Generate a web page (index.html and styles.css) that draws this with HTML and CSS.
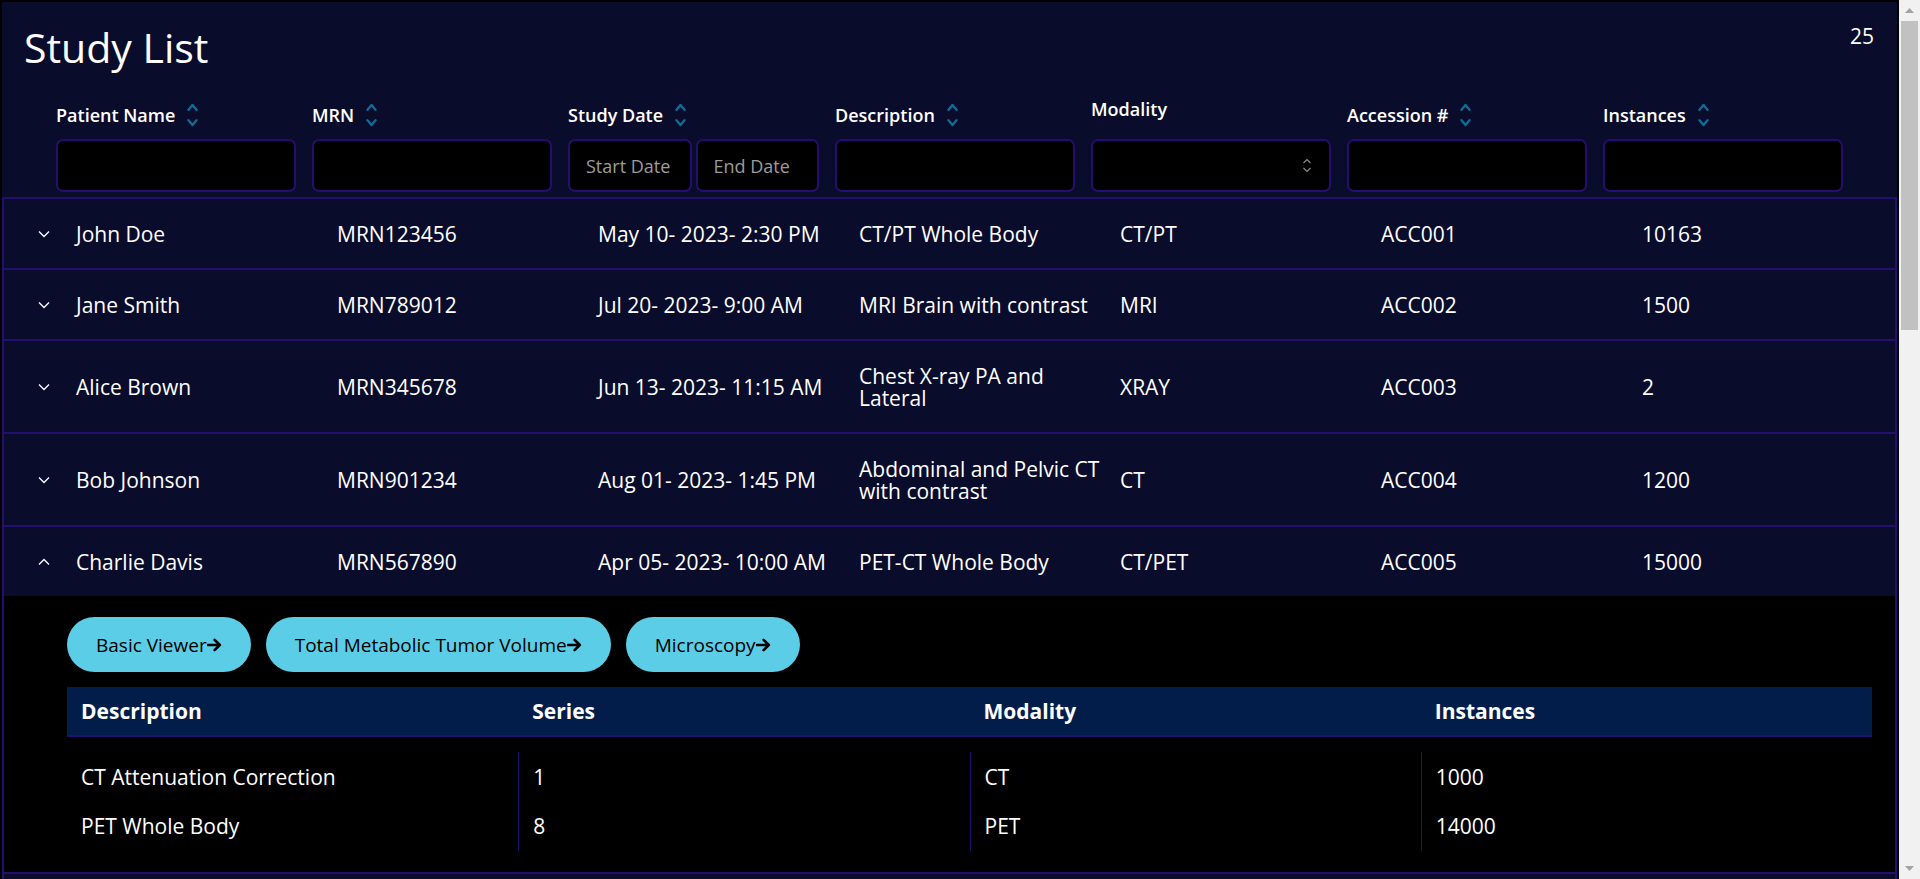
FILE: index.html
```html
<!DOCTYPE html>
<html lang="en">
<head>
<meta charset="utf-8">
<title>Study List</title>
<link rel="stylesheet" href="styles.css">
</head>
<body>
<div class="viewport">
<div class="app">
  <header class="header">
    <div class="title-row">
      <h1 class="title">Study List</h1>
      <span class="count">25</span>
    </div>
    <div class="filters">
      <div class="filter">
        <div class="flabel">Patient Name <svg class="sort" width="11" height="24" viewBox="0 0 11 24"><path d="M1.5 6.8 L5.5 2 L9.5 6.8 M1.5 17.2 L5.5 22 L9.5 17.2"/></svg></div>
        <input class="box" type="text">
      </div>
      <div class="filter">
        <div class="flabel">MRN <svg class="sort" width="11" height="24" viewBox="0 0 11 24"><path d="M1.5 6.8 L5.5 2 L9.5 6.8 M1.5 17.2 L5.5 22 L9.5 17.2"/></svg></div>
        <input class="box" type="text">
      </div>
      <div class="filter filter-date">
        <div class="flabel">Study Date <svg class="sort" width="11" height="24" viewBox="0 0 11 24"><path d="M1.5 6.8 L5.5 2 L9.5 6.8 M1.5 17.2 L5.5 22 L9.5 17.2"/></svg></div>
        <div class="date-pair">
          <input class="box" type="text" placeholder="Start Date">
          <input class="box" type="text" placeholder="End Date">
        </div>
      </div>
      <div class="filter">
        <div class="flabel">Description <svg class="sort" width="11" height="24" viewBox="0 0 11 24"><path d="M1.5 6.8 L5.5 2 L9.5 6.8 M1.5 17.2 L5.5 22 L9.5 17.2"/></svg></div>
        <input class="box" type="text">
      </div>
      <div class="filter">
        <div class="flabel flabel-plain">Modality</div>
        <div class="box select">
          <svg class="select-icon" width="10" height="15" viewBox="0 0 10 15"><path d="M1.5 5 L5 1.5 L8.5 5 M1.5 10 L5 13.5 L8.5 10"/></svg>
        </div>
      </div>
      <div class="filter">
        <div class="flabel">Accession # <svg class="sort" width="11" height="24" viewBox="0 0 11 24"><path d="M1.5 6.8 L5.5 2 L9.5 6.8 M1.5 17.2 L5.5 22 L9.5 17.2"/></svg></div>
        <input class="box" type="text">
      </div>
      <div class="filter">
        <div class="flabel">Instances <svg class="sort" width="11" height="24" viewBox="0 0 11 24"><path d="M1.5 6.8 L5.5 2 L9.5 6.8 M1.5 17.2 L5.5 22 L9.5 17.2"/></svg></div>
        <input class="box" type="text">
      </div>
    </div>
  </header>

  <div class="studies">
    <div class="row">
      <div class="cell toggle"><svg width="12" height="8" viewBox="0 0 12 8"><path d="M1 1.5 L6 6.5 L11 1.5"/></svg></div>
      <div class="cell">John Doe</div><div class="cell">MRN123456</div><div class="cell">May 10- 2023- 2:30 PM</div><div class="cell">CT/PT Whole Body</div><div class="cell">CT/PT</div><div class="cell">ACC001</div><div class="cell">10163</div>
    </div>
    <div class="row">
      <div class="cell toggle"><svg width="12" height="8" viewBox="0 0 12 8"><path d="M1 1.5 L6 6.5 L11 1.5"/></svg></div>
      <div class="cell">Jane Smith</div><div class="cell">MRN789012</div><div class="cell">Jul 20- 2023- 9:00 AM</div><div class="cell">MRI Brain with contrast</div><div class="cell">MRI</div><div class="cell">ACC002</div><div class="cell">1500</div>
    </div>
    <div class="row">
      <div class="cell toggle"><svg width="12" height="8" viewBox="0 0 12 8"><path d="M1 1.5 L6 6.5 L11 1.5"/></svg></div>
      <div class="cell">Alice Brown</div><div class="cell">MRN345678</div><div class="cell">Jun 13- 2023- 11:15 AM</div><div class="cell">Chest X-ray PA and Lateral</div><div class="cell">XRAY</div><div class="cell">ACC003</div><div class="cell">2</div>
    </div>
    <div class="row">
      <div class="cell toggle"><svg width="12" height="8" viewBox="0 0 12 8"><path d="M1 1.5 L6 6.5 L11 1.5"/></svg></div>
      <div class="cell">Bob Johnson</div><div class="cell">MRN901234</div><div class="cell">Aug 01- 2023- 1:45 PM</div><div class="cell">Abdominal and Pelvic CT with contrast</div><div class="cell">CT</div><div class="cell">ACC004</div><div class="cell">1200</div>
    </div>
    <div class="row row-open">
      <div class="cell toggle"><svg width="12" height="8" viewBox="0 0 12 8"><path d="M1 6.5 L6 1.5 L11 6.5"/></svg></div>
      <div class="cell">Charlie Davis</div><div class="cell">MRN567890</div><div class="cell">Apr 05- 2023- 10:00 AM</div><div class="cell">PET-CT Whole Body</div><div class="cell">CT/PET</div><div class="cell">ACC005</div><div class="cell">15000</div>
    </div>
    <div class="expanded">
      <div class="modes">
        <button class="mode-btn" type="button">Basic Viewer<svg width="15" height="14" viewBox="0 0 15 14"><path d="M1 7 H12.8 M7.6 1.8 L12.8 7 L7.6 12.2"/></svg></button>
        <button class="mode-btn" type="button">Total Metabolic Tumor Volume<svg width="15" height="14" viewBox="0 0 15 14"><path d="M1 7 H12.8 M7.6 1.8 L12.8 7 L7.6 12.2"/></svg></button>
        <button class="mode-btn" type="button">Microscopy<svg width="15" height="14" viewBox="0 0 15 14"><path d="M1 7 H12.8 M7.6 1.8 L12.8 7 L7.6 12.2"/></svg></button>
      </div>
      <div class="series">
        <div class="series-head">
          <div class="scell">Description</div><div class="scell">Series</div><div class="scell">Modality</div><div class="scell">Instances</div>
        </div>
        <div class="series-body">
          <div class="series-row">
            <div class="scell">CT Attenuation Correction</div><div class="scell">1</div><div class="scell">CT</div><div class="scell">1000</div>
          </div>
          <div class="series-row">
            <div class="scell">PET Whole Body</div><div class="scell">8</div><div class="scell">PET</div><div class="scell">14000</div>
          </div>
        </div>
      </div>
    </div>
    <div class="row"><div class="cell toggle"><svg width="12" height="8" viewBox="0 0 12 8"><path d="M1 1.5 L6 6.5 L11 1.5"/></svg></div><div class="cell">Emily Clark</div><div class="cell">MRN234567</div><div class="cell">Sep 12- 2023- 8:30 AM</div><div class="cell">CT Head without contrast</div><div class="cell">CT</div><div class="cell">ACC006</div><div class="cell">320</div></div>
    <div class="row"><div class="cell toggle"><svg width="12" height="8" viewBox="0 0 12 8"><path d="M1 1.5 L6 6.5 L11 1.5"/></svg></div><div class="cell">Frank Miller</div><div class="cell">MRN678901</div><div class="cell">Oct 03- 2023- 3:10 PM</div><div class="cell">MRI Knee Left</div><div class="cell">MRI</div><div class="cell">ACC007</div><div class="cell">640</div></div>
    <div class="row"><div class="cell toggle"><svg width="12" height="8" viewBox="0 0 12 8"><path d="M1 1.5 L6 6.5 L11 1.5"/></svg></div><div class="cell">Grace Lee</div><div class="cell">MRN112233</div><div class="cell">Feb 14- 2023- 11:45 AM</div><div class="cell">Mammography Bilateral</div><div class="cell">MG</div><div class="cell">ACC008</div><div class="cell">4</div></div>
    <div class="row"><div class="cell toggle"><svg width="12" height="8" viewBox="0 0 12 8"><path d="M1 1.5 L6 6.5 L11 1.5"/></svg></div><div class="cell">Henry Wilson</div><div class="cell">MRN445566</div><div class="cell">Mar 22- 2023- 9:20 AM</div><div class="cell">Ultrasound Abdomen</div><div class="cell">US</div><div class="cell">ACC009</div><div class="cell">48</div></div>
    <div class="row"><div class="cell toggle"><svg width="12" height="8" viewBox="0 0 12 8"><path d="M1 1.5 L6 6.5 L11 1.5"/></svg></div><div class="cell">Isabel Moore</div><div class="cell">MRN778899</div><div class="cell">Nov 08- 2023- 4:05 PM</div><div class="cell">CT Chest with contrast</div><div class="cell">CT</div><div class="cell">ACC010</div><div class="cell">410</div></div>
  </div>
</div>
</div>
<div class="scrollbar" aria-hidden="true">
  <div class="sb-btn"><svg width="9" height="5" viewBox="0 0 9 5"><polygon points="0,5 4.5,0 9,5"/></svg></div>
  <div class="sb-track"><div class="sb-thumb"></div></div>
  <div class="sb-btn"><svg width="9" height="5" viewBox="0 0 9 5"><polygon points="0,0 9,0 4.5,5"/></svg></div>
</div>
</body>
</html>
```

FILE: styles.css
```css
:root {
  --navy: #0a0c2c;
  --line: #260e70;
  --sort: #106b97;
  --sub: #031d4b;
  --btn: #5ccde6;
}

html {
  background: #000;
}

body {
  margin: 0;
  height: 100vh;
  overflow: hidden;
  display: flex;
  background: #000;
  color: #fff;
  font-family: "Open Sans", "Noto Sans", sans-serif;
}

.viewport {
  flex: 1;
  min-width: 0;
  height: 100vh;
  overflow: hidden;
}

/* fake classic scrollbar */
.scrollbar {
  flex: none;
  width: 21px;
  height: 100vh;
  display: flex;
  flex-direction: column;
  background: #f1f1f1;
}

.sb-btn {
  height: 21px;
  flex: none;
  display: flex;
  align-items: center;
  justify-content: center;
}

.sb-btn polygon {
  fill: #a3a3a3;
}

.sb-track {
  flex: 1;
  padding: 0 2px;
}

.sb-thumb {
  height: 309px;
  background: #c1c1c1;
}

.app {
  margin: 2px 2px 0 2px;
}

/* ---------- header ---------- */
.header {
  background: var(--navy);
  padding: 20px 23px 5px 0;
}

.title-row {
  display: flex;
  justify-content: space-between;
  align-items: flex-start;
  padding-left: 22px;
}

.title {
  margin: 0;
  font-size: 41px;
  font-weight: 400;
  line-height: 50px;
}

.count {
  font-size: 21px;
  line-height: 30px;
  margin-top: -1px;
}

.filters {
  display: flex;
  gap: 16px;
  margin-top: 31px;
  padding-left: 54px;
}

.filter {
  width: 240px;
  display: flex;
  flex-direction: column;
}

.filter-date {
  width: 251px;
}

.flabel {
  display: flex;
  align-items: center;
  gap: 12px;
  height: 24px;
  margin-bottom: 12px;
  font-size: 18px;
  font-weight: 600;
  white-space: nowrap;
}

.flabel-plain {
  margin-top: -6px;
  margin-bottom: 18px;
}

.sort path {
  fill: none;
  stroke: var(--sort);
  stroke-width: 2.4;
  stroke-linecap: round;
  stroke-linejoin: round;
}

.box {
  box-sizing: border-box;
  height: 53px;
  width: 100%;
  background: #000;
  border: 2px solid var(--line);
  border-radius: 7px;
  color: #fff;
  font-family: inherit;
  font-size: 18px;
  padding: 0 16px;
  outline: none;
}

.box::placeholder {
  color: #9c9c9c;
}

.date-pair {
  display: flex;
  gap: 4px;
}

.date-pair .box {
  flex: 1;
  min-width: 0;
}

.select {
  display: flex;
  align-items: center;
  justify-content: flex-end;
  padding-right: 17px;
}

.select-icon path {
  fill: none;
  stroke: #8c8c8c;
  stroke-width: 1.2;
}

/* ---------- studies table ---------- */
.studies {
  background: var(--navy);
  border: 2px solid var(--line);
}

.row {
  display: grid;
  grid-template-columns: 72px repeat(6, 261px) 1fr;
  align-items: center;
  padding: 23.5px 0;
  border-bottom: 2px solid var(--line);
  font-size: 21px;
  line-height: 22px;
}

.row-open {
  border-bottom: none;
}

.cell {
  padding-right: 12px;
}

.toggle {
  display: flex;
  align-items: center;
  padding-left: 34px;
}

.toggle path {
  fill: none;
  stroke: #fff;
  stroke-width: 1.3;
}

/* ---------- expanded area ---------- */
.expanded {
  background: #000;
  padding: 21px 23px 21px 63px;
  border-bottom: 2px solid var(--line);
}

.modes {
  display: flex;
  gap: 15px;
  margin-bottom: 15px;
}

.mode-btn {
  display: inline-flex;
  align-items: center;
  height: 55px;
  padding: 0 29px;
  border: none;
  border-radius: 28px;
  background: var(--btn);
  color: #000;
  font-family: inherit;
  font-size: 19px;
}

.mode-btn path {
  fill: none;
  stroke: #000;
  stroke-width: 2.6;
  stroke-linecap: round;
  stroke-linejoin: round;
}

.series-head,
.series-row {
  display: grid;
  grid-template-columns: repeat(4, 1fr);
  align-items: center;
}

.series-head {
  height: 48px;
  background: var(--sub);
  border-bottom: 2px solid var(--line);
  font-size: 21px;
  font-weight: 700;
}

.series-head .scell {
  padding-left: 14px;
}

.series-body {
  margin-top: 15px;
}

.series-row {
  height: 49.5px;
  font-size: 21px;
  align-items: stretch;
}

.series-row .scell {
  display: flex;
  align-items: center;
  padding-left: 14px;
}

.series-row .scell + .scell {
  border-left: 1px solid var(--line);
}
```
